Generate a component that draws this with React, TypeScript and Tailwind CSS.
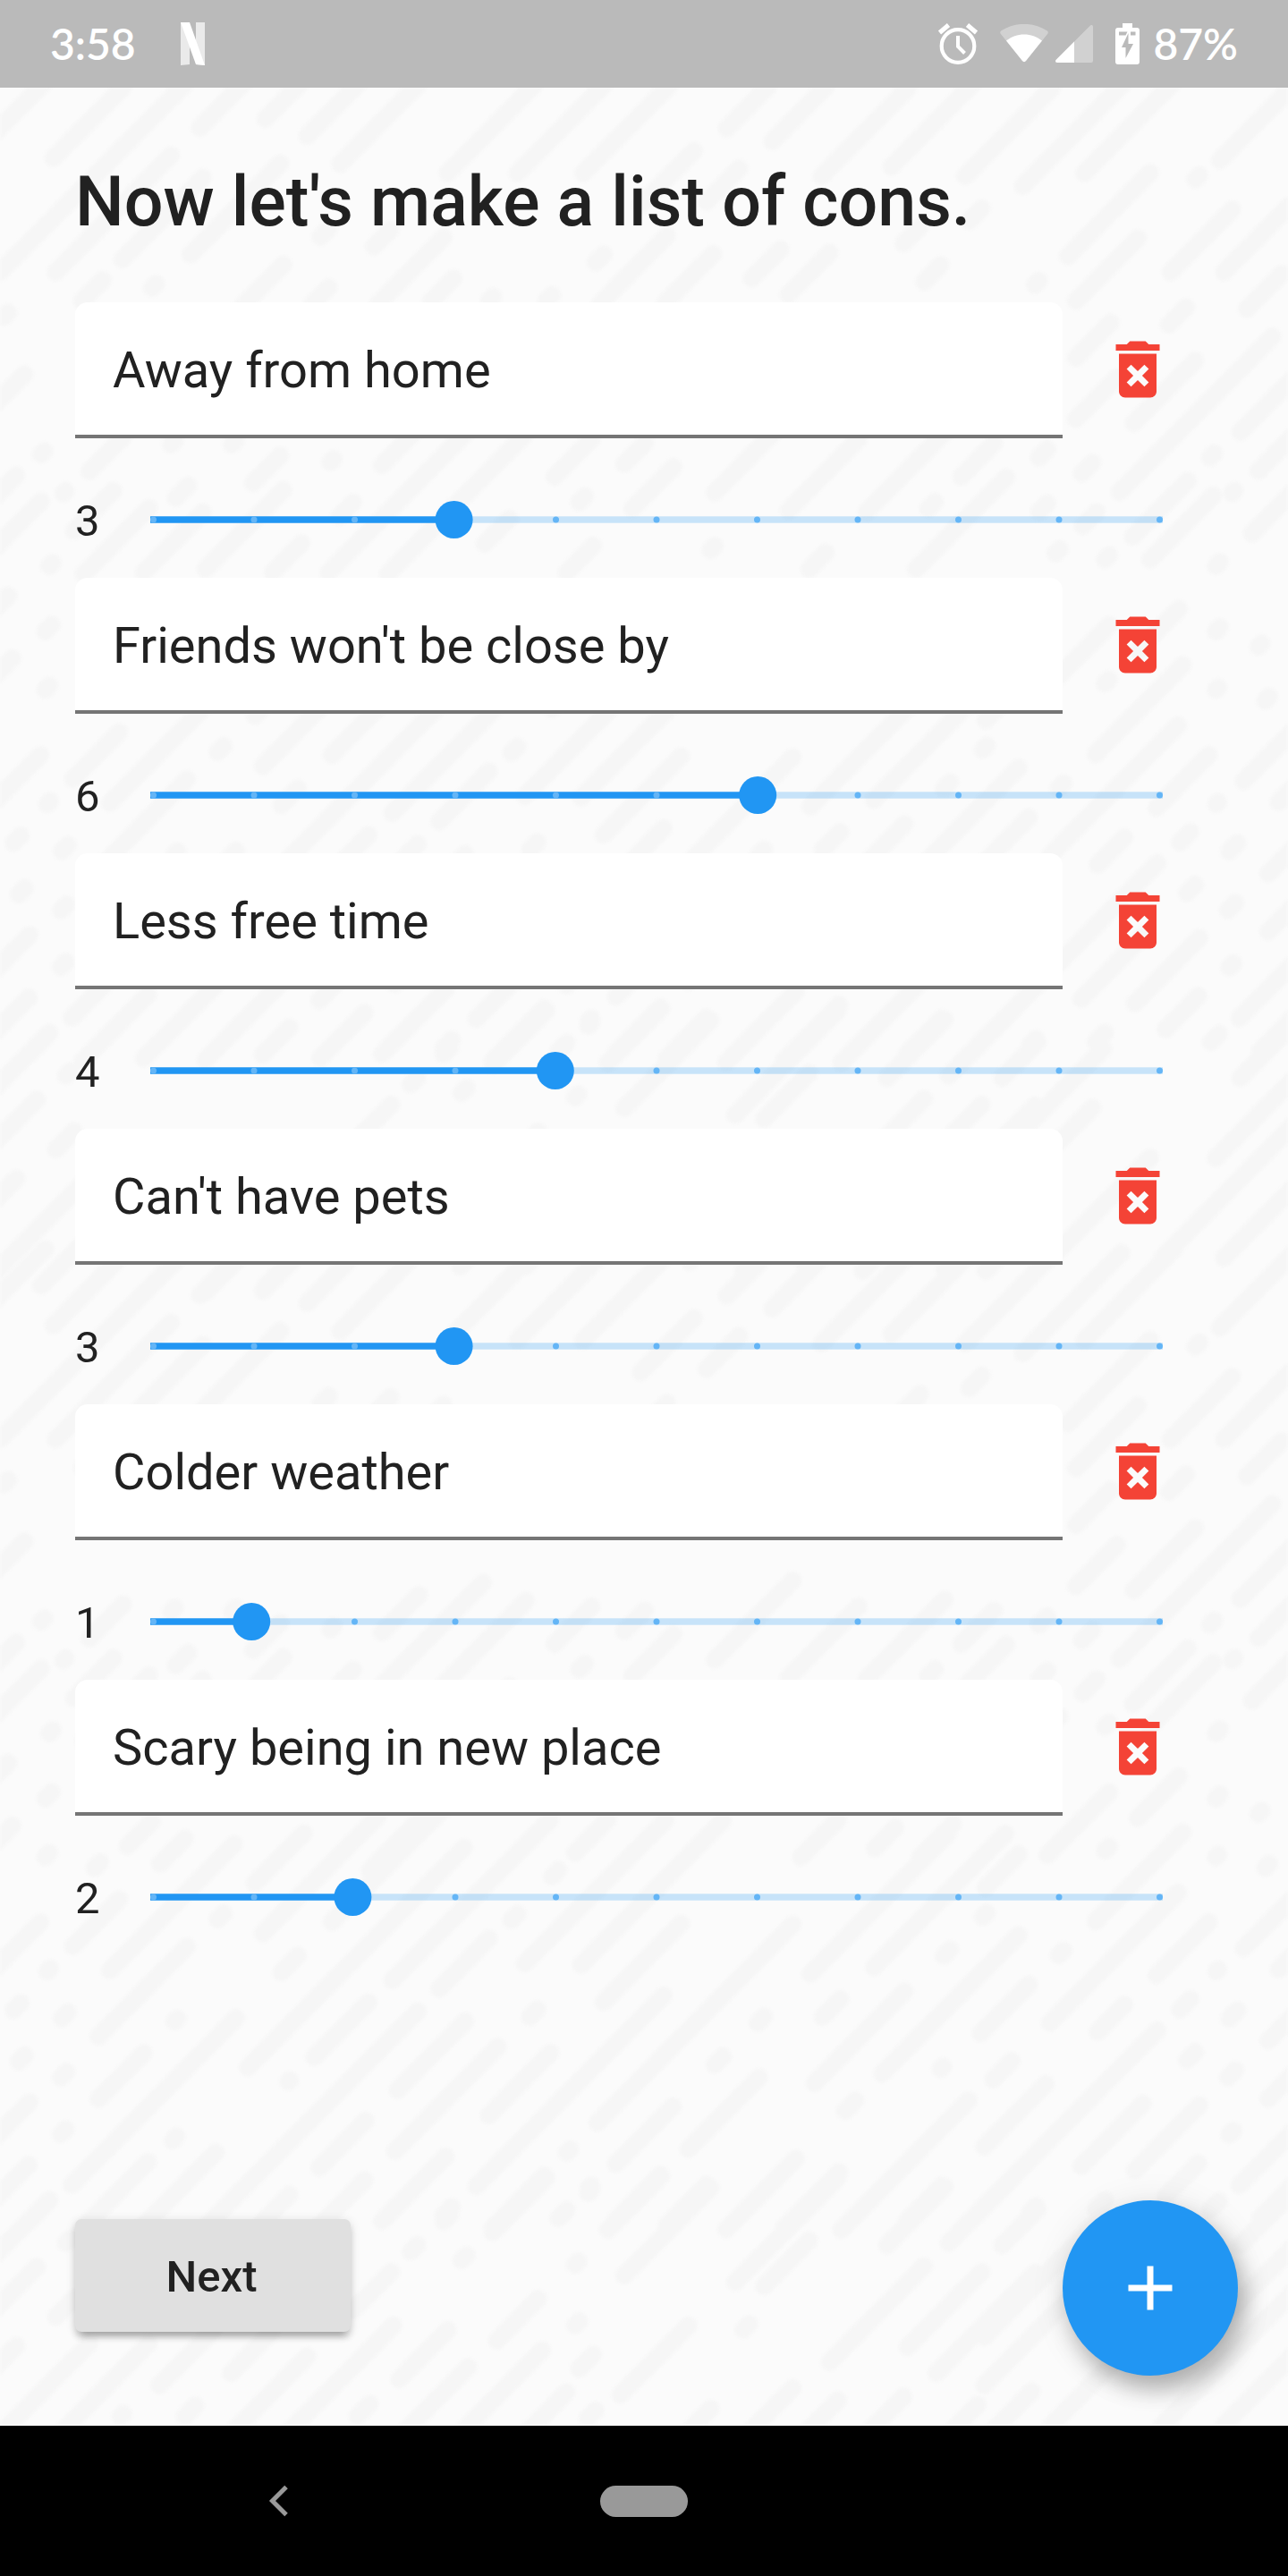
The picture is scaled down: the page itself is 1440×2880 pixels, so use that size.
import React from "react";

type Streak = [number, number, number];
type Band = { x: number; y: number; sx: number; sy: number; streaks: Streak[] };

const TILE = 1305;
const RISE = 1.017;

// Diagonal streaks of the wallpaper: lower-left end (x, y) and the x of the upper-right end,
// given in the units of their band.
const BANDS: Band[] = [
  {
    x: 0, y: 90, sx: 1.0889, sy: 2.8,
    streaks: [
      [-20, 200, 55], [65, 243, 150], [0, 600, 225], [68, 600, 208], [243, 148, 300], [323, 120, 365],
      [374, 173, 435], [414, 261, 510], [149, 560, 247], [232, 545, 341], [455, 520, 475], [545, 290, 650],
      [390, 490, 400], [725, 570, 735], [885, 150, 935], [940, 190, 1005], [630, 290, 735], [710, 290, 815],
      [780, 390, 845], [860, 380, 900], [1000, 300, 1105], [1085, 270, 1185], [1175, 300, 1280],
      [1245, 330, 1365], [1320, 290, 1430], [1100, 510, 1120], [1180, 440, 1195], [290, 720, 345],
      [380, 700, 400], [185, 650, 190], [100, 690, 125], [460, 700, 540], [525, 690, 552], [595, 690, 600],
      [665, 690, 672], [730, 700, 812], [810, 695, 868], [915, 620, 950], [960, 670, 1010], [1125, 630, 1145],
      [1260, 640, 1265], [1300, 550, 1400], [1310, 690, 1385], [1425, 600, 1500], [1490, 600, 1570],
      [1455, 310, 1460], [1485, 250, 1575], [1518, 715, 1560], [1423, 764, 1444], [1310, 868, 1352],
      [1310, 1060, 1360], [1380, 1073, 1455], [1363, 1288, 1549], [1510, 1100, 1590], [1532, 1222, 1590],
      [1473, 1180, 1478], [1500, 1292, 1503], [1379, 1428, 1446], [1400, 1500, 1477], [1524, 1418, 1590],
      [1317, 1230, 1330], [1265, 1180, 1275], [1265, 1350, 1275], [1318, 1395, 1335], [1285, 1480, 1290],
      [1345, 1500, 1350], [1480, 1520, 1485], [109, 1223, 150], [77, 1293, 80], [208, 1140, 213],
      [282, 1140, 287], [308, 1260, 341], [214, 1307, 229], [402, 1195, 406], [465, 1204, 510],
      [413, 1365, 430], [102, 1545, 181], [175, 1540, 247], [90, 1410, 138], [332, 1540, 367],
      [250, 1530, 345], [400, 1540, 588], [472, 1545, 640], [675, 1240, 720], [760, 1200, 785],
      [870, 1290, 965], [770, 1340, 820], [1055, 1350, 1150], [960, 1345, 1045], [1170, 1240, 1210],
      [705, 1320, 712], [690, 1540, 722], [865, 1470, 870], [985, 1530, 1005], [1130, 1340, 1138],
      [1115, 1530, 1225], [590, 1450, 620], [50, 1170, 54], [-20, 1340, 20], [-20, 1500, 50],
      [60, 1520, 64], [5, 740, 10], [-20, 1050, 30],
    ],
  },
  {
    x: 0, y: 655, sx: 1.0889, sy: 2.063,
    streaks: [
      [55, 105, 63], [-10, 215, 15], [-20, 80, 10], [55, 240, 60], [115, 265, 122], [155, 215, 185],
      [195, 255, 225], [310, 300, 370], [320, 415, 460], [404, 390, 540], [450, 270, 530], [672, 285, 680],
      [700, 230, 740], [975, 240, 1020], [1065, 220, 1090], [1120, 240, 1160], [1200, 310, 1240],
      [1275, 235, 1350], [1335, 385, 1440], [1385, 150, 1435], [1345, 225, 1350], [1480, 240, 1483],
      [1540, 265, 1545], [1480, 105, 1485], [1532, 140, 1536],
      [-20, 1185, 60], [-20, 1310, 45], [68, 1300, 90], [-10, 1425, 20], [80, 1130, 85], [-20, 1610, 109],
      [50, 1614, 181], [194, 1458, 260], [281, 1430, 330], [250, 1630, 374], [320, 1626, 479],
      [490, 1570, 570], [486, 1444, 545], [430, 1285, 476], [225, 1530, 238], [147, 1530, 150],
      [435, 1530, 450], [500, 1150, 508], [540, 1080, 548], [562, 1170, 568], [600, 1105, 665],
      [716, 1015, 720], [700, 1180, 704], [740, 1100, 805], [700, 1320, 705], [605, 1355, 655],
      [760, 1205, 865], [705, 1420, 722], [755, 1480, 838], [905, 1330, 912], [895, 1220, 1020],
      [1080, 1135, 1150], [1155, 1130, 1235], [1220, 1135, 1263], [930, 1230, 985], [1010, 1405, 1125],
      [1105, 1370, 1195], [1140, 1430, 1260], [905, 1580, 965], [980, 1570, 1020], [1050, 1580, 1100],
      [560, 1570, 660], [640, 1570, 690], [715, 1535, 725], [840, 1560, 865], [1150, 1580, 1190],
      [1198, 1347, 1343], [1198, 1458, 1330], [1200, 1580, 1256], [1280, 1550, 1400], [1415, 1550, 1580],
      [1490, 1550, 1600], [1510, 1135, 1600], [1480, 1320, 1600],
    ],
  },
  {
    x: 0, y: 835, sx: 2.178, sy: 3,
    streaks: [
      [-30, 207, 98], [178, 108, 290], [268, 188, 570], [240, 410, 455], [115, 192, 122], [33, 322, 50],
      [150, 350, 165], [45, 495, 60], [148, 548, 162], [148, 738, 160], [240, 620, 350], [425, 360, 432],
      [420, 760, 430], [175, 908, 575], [-20, 760, 72], [-40, 995, 70], [70, 1032, 118], [200, 1055, 360],
      [350, 1045, 525], [530, 18, 545], [640, 65, 720], [685, 195, 725], [808, 25, 830], [603, 515, 1130],
      [955, 222, 1340], [1070, 250, 1190], [765, 480, 897], [702, 562, 706], [500, 1050, 1017],
      [968, 590, 1133], [962, 795, 1212], [778, 850, 890], [1190, 675, 1340], [1278, 165, 1620],
      [1415, 170, 1760], [1470, 295, 1658], [1290, 345, 1308], [1245, 20, 1260], [1160, 912, 1616],
      [1455, 700, 1930], [1380, 800, 1388], [1500, 838, 1638], [1433, 920, 1440], [930, 1030, 1085],
      [640, 1032, 705], [780, 1043, 888], [1080, 1010, 1100], [1200, 1052, 1325], [1360, 1020, 1380],
      [1500, 1025, 1608],
    ],
  },
  {
    x: 720, y: 835, sx: 2.178, sy: 3,
    streaks: [
      [55, 1044, 152], [405, 200, 740], [560, 178, 880], [730, 140, 745], [825, 10, 835], [580, 535, 912],
      [1010, 138, 1022], [1100, 25, 1110], [820, 400, 937], [988, 365, 1300], [1105, 395, 1170],
      [1248, 205, 1375], [1393, 192, 1398], [1460, 115, 1590], [1545, 185, 1590], [277, 365, 292],
      [435, 345, 478], [415, 567, 635], [1305, 320, 1330], [1425, 350, 1445], [1520, 425, 1620],
      [172, 505, 192], [722, 520, 728], [850, 555, 895], [1322, 490, 1342], [1422, 548, 1440],
      [1520, 620, 1620], [490, 660, 515], [108, 788, 280], [828, 780, 978], [480, 1059, 790],
      [1425, 740, 1435], [1065, 845, 1215], [1195, 860, 1352], [770, 1062, 1250], [1450, 910, 1600],
      [200, 1058, 370], [340, 1054, 475], [640, 1030, 725], [940, 1000, 955], [1270, 947, 1350],
      [1100, 990, 1122], [1380, 990, 1400], [1500, 1020, 1600],
    ],
  },
];

const streakPath = BANDS.flatMap(({ x, y, sx, sy, streaks }) =>
  streaks.map(([x0, y0, x1]) => {
    const dx = (x1 - x0) / sx;
    return `M${(x + x0 / sx).toFixed(1)} ${(y + y0 / sy).toFixed(1)}l${dx.toFixed(1)} ${(-dx * RISE).toFixed(1)}`;
  })
).join("");

function Wallpaper() {
  return (
    <svg className="absolute inset-0 h-full w-full blur-[1.5px]" viewBox="0 98 1440 2614" aria-hidden="true">
      <g fill="none" stroke="#f6f6f6" strokeWidth="20" strokeLinecap="round">
        <path d={streakPath} />
        <path d={streakPath} transform={`translate(0 ${TILE})`} />
      </g>
    </svg>
  );
}

function StatusBar() {
  return (
    <header className="flex h-[98px] items-center bg-[#bababa] pr-[56px] pl-[56px] font-['Lato',sans-serif] text-[48px] font-semibold text-white">
      <span className="w-[146px] leading-none">3:58</span>
      <svg className="h-[48px] w-[27px]" viewBox="0 0 27 48">
        <path d="M0 0h10v47l-10 1zM17 0h10v48l-10-1z" fill="#eaeaea" />
        <path d="M0 0h10l17 48-10-1z" fill="#fff" />
      </svg>
      <div className="ml-auto flex items-center">
        <svg className="h-[46px] w-[46px]" viewBox="0 0 46 46" fill="none" stroke="#fff">
          <circle cx="23" cy="25.500" r="18.300" strokeWidth="4.200" />
          <path d="M23 14v12l7.500 7.500" strokeWidth="4" />
          <path d="M2.500 10.500l10-8.500M43.500 10.500l-10-8.500" strokeWidth="5" />
        </svg>
        <svg className="ml-[24px] h-[44px] w-[54px]" viewBox="0 0 54 44">
          <path d="M1.300 11.500C-.3 10-.2 8.400 1.500 7.200 17-2.600 37-2.600 52.500 7.200c1.700 1.200 1.800 2.800.2 4.300L29 41c-1.200 1.500-2.800 1.500-4 0z" fill="#d1d1d1" />
          <path d="M7 18.500c11.500-9.500 28.500-9.500 40 0L29 41c-1.200 1.500-2.800 1.500-4 0z" fill="#fff" />
        </svg>
        <svg className="ml-[8px] h-[42px] w-[42px]" viewBox="0 0 42 42">
          <path d="M2 42h38q2 0 2-2V2c0-2-2-2.500-3.300-1.200L.8 38.700C-.5 40 0 42 2 42z" fill="#d1d1d1" />
          <path d="M2 42h19V18.500L.8 38.700C-.5 40 0 42 2 42z" fill="#fff" />
        </svg>
        <svg className="ml-[25px] h-[46px] w-[27px]" viewBox="0 0 27 46">
          <path d="M8 0h11v5h5q3 0 3 3v35q0 3-3 3H3q-3 0-3-3V8q0-3 3-3h5z" fill="#fff" />
          <path d="M4 9.500h9.500l-2 4H4zM17 9.500h5.500v4H17zM14.500 11v12H20l-8.500 16V27H7z" fill="#bababa" />
        </svg>
        <span className="ml-[15px] leading-none">87%</span>
      </div>
    </header>
  );
}

function DeleteIcon() {
  return (
    <svg className="h-[84px] w-[84px]" viewBox="0 0 24 24" fill="#f44336">
      <path d="M6 19c0 1.100.9 2 2 2h8c1.100 0 2-.9 2-2V7H6v12zm2.460-7.120l1.410-1.410L12 12.590l2.120-2.120 1.410 1.410L13.410 14l2.120 2.120-1.410 1.410L12 15.410l-2.120 2.120-1.410-1.410L10.590 14l-2.130-2.120zM15.500 4l-1-1h-5l-1 1H5v2h14V4z" />
    </svg>
  );
}

function Slider({ value }: { value: number }) {
  return (
    <svg className="h-[42px] w-[1132px]" viewBox="0 0 1132 42">
      <rect x="0" y="17.300" width="1132" height="7.400" fill="#2196f3" fillOpacity="0.24" />
      <rect x="0" y="17.300" width={value * 113.2} height="7.400" fill="#2196f3" />
      {Array.from({ length: 11 }, (_, i) => (
        <circle key={i} cx={3.5 + i * 112.5} cy="21" r="3.500" fill="#64b5f6" />
      ))}
      <circle cx={value * 113.2} cy="21" r="21" fill="#2196f3" />
    </svg>
  );
}

const CONS = [
  { label: "Away from home", weight: 3 },
  { label: "Friends won't be close by", weight: 6 },
  { label: "Less free time", weight: 4 },
  { label: "Can't have pets", weight: 3 },
  { label: "Colder weather", weight: 1 },
  { label: "Scary being in new place", weight: 2 },
];

function ConItem({ label, weight }: { label: string; weight: number }) {
  return (
    <li className="h-[308px]">
      <div className="flex items-center">
        <div className="flex h-[152px] w-[1104px] items-center rounded-t-[14px] border-b-4 border-[#757575] bg-white px-[42px] pt-[4px] text-[56px] leading-none">
          {label}
        </div>
        <button className="mb-[3px] ml-[42px]" aria-label="Delete">
          <DeleteIcon />
        </button>
      </div>
      <div className="mt-[70px] flex h-[42px] items-center">
        <span className="w-[84px] pt-[3px] text-[49px] leading-none">{weight}</span>
        <Slider value={weight} />
      </div>
    </li>
  );
}

export default function App() {
  return (
    <div className="flex h-[2880px] w-[1440px] flex-col overflow-hidden bg-[#fbfbfb] font-['Roboto',sans-serif] text-[#212121]">
      <StatusBar />
      <main className="relative flex h-[2614px] flex-col overflow-hidden">
        <Wallpaper />
        <div className="relative flex flex-1 flex-col px-[84px]">
          <h1 className="mt-[82px] h-[158px] text-[77.1px] leading-[92px] font-medium whitespace-nowrap">
            Now let's make a list of cons.
          </h1>
          <ul>
            {CONS.map((c) => (
              <ConItem key={c.label} {...c} />
            ))}
          </ul>
          <div className="mt-auto mr-[-28px] mb-[56px] flex items-start justify-between">
            <button className="mt-[21px] h-[126px] w-[308px] rounded-[7px] bg-[#e0e0e0] pt-[2px] pr-[3px] text-[49px] leading-none font-medium shadow-[0_10px_7px_-7px_rgba(0,0,0,0.2),0_7px_7px_rgba(0,0,0,0.14),0_2px_12px_rgba(0,0,0,0.12)]">
              Next
            </button>
            <button
              className="flex h-[196px] w-[196px] items-center justify-center rounded-full bg-[#2196f3] shadow-[8px_16px_24px_rgba(0,0,0,0.26),2px_4px_40px_rgba(0,0,0,0.1)]"
              aria-label="Add"
            >
              <svg className="h-[84px] w-[84px]" viewBox="0 0 24 24" fill="#fff">
                <path d="M19 13h-6v6h-2v-6H5v-2h6V5h2v6h6v2z" />
              </svg>
            </button>
          </div>
        </div>
      </main>
      <nav className="flex h-[168px] items-center bg-black">
        <svg className="ml-[300px] h-[36px] w-[22px]" viewBox="0 0 22 36" fill="none" stroke="#999" strokeWidth="5">
          <path d="M20 2.500L4.500 18 20 33.500" />
        </svg>
        <span className="ml-[349px] h-[35px] w-[98px] rounded-full bg-[#999]" />
      </nav>
    </div>
  );
}
